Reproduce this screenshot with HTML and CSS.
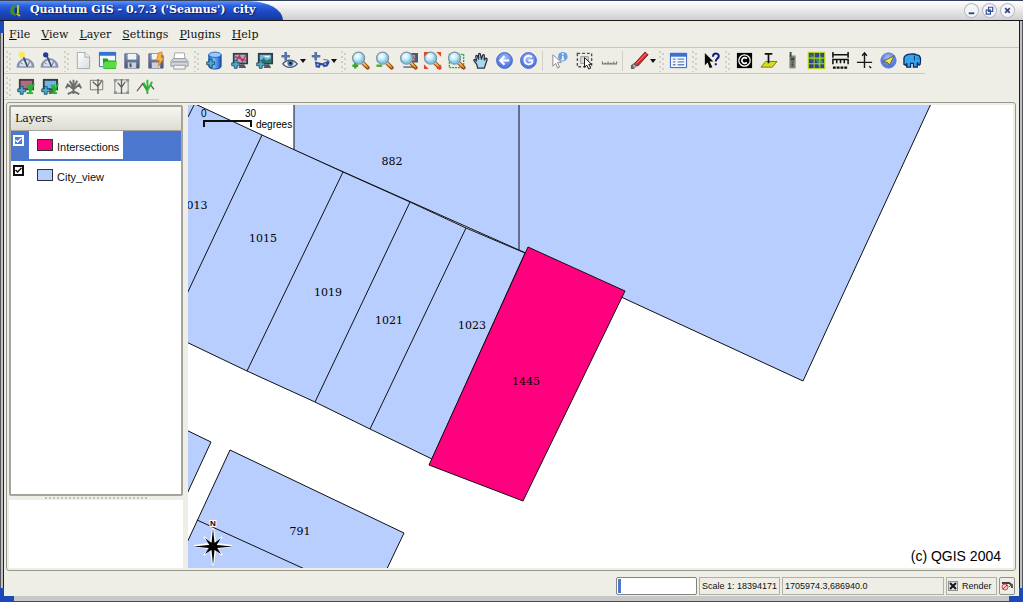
FILE: index.html
```html
<!DOCTYPE html>
<html lang="en">
<head>
<meta charset="utf-8">
<title>Quantum GIS - 0.7.3 ('Seamus') city</title>
<link rel="stylesheet" href="styles.css">
</head>
<body>
<svg class="defs" aria-hidden="true">
  <defs>
    <linearGradient id="wood" x1="0" y1="0" x2="1" y2="1"><stop offset="0" stop-color="#f8c060"/><stop offset="1" stop-color="#c05808"/></linearGradient>
    <radialGradient id="glass" cx=".4" cy=".35"><stop offset="0" stop-color="#fff"/><stop offset=".6" stop-color="#c4ecf8"/><stop offset="1" stop-color="#84c8e4"/></radialGradient>
    <radialGradient id="ball" cx=".5" cy=".35"><stop offset="0" stop-color="#b0c4fa"/><stop offset="1" stop-color="#5478e4"/></radialGradient>
    <linearGradient id="cyl" x1="0" x2="1"><stop offset="0" stop-color="#1c64d0"/><stop offset=".4" stop-color="#7cc0fc"/><stop offset="1" stop-color="#1450b8"/></linearGradient>
    <linearGradient id="page" x1="0" y1="0" x2="1" y2="1"><stop offset="0" stop-color="#fff"/><stop offset="1" stop-color="#d8dce4"/></linearGradient>
    <linearGradient id="metal" x1="0" y1="0" x2="0" y2="1"><stop offset="0" stop-color="#8c9cc0"/><stop offset="1" stop-color="#44506c"/></linearGradient>
  </defs>
  <symbol id="lens" viewBox="0 0 20 20"><path d="M12.500 12.500l5 5" stroke="#7c3c04" stroke-width="4" stroke-linecap="round"/><path d="M12.500 12.500l5 5" stroke="url(#wood)" stroke-width="2.500" stroke-linecap="round"/><path d="M13 12.500l4.500 4.500" stroke="#fcd888" stroke-width=".8"/><circle cx="8" cy="7.500" r="6.300" fill="url(#glass)" stroke="#7c98a8" stroke-width="1.400"/></symbol>
  <symbol id="plus" viewBox="0 0 10 10"><path d="M3.500.8h3v2.700h2.700v3H6.500v2.700h-3V6.500H.8v-3h2.700z" fill="#54a8c4" stroke="#144c6c" stroke-width=".9"/></symbol>
  <symbol id="gauge" viewBox="0 0 20 20"><path d="M1 17a9 9 0 0 1 18 0z" fill="#8494b4" stroke="#8c98b0"/><path d="M3.500 16a6.500 6.500 0 0 1 13 0z" fill="#dce4f0"/><path d="M7 4.500l5 12" stroke="#3c4868" stroke-width="1.800"/><path d="M12 16l2.500-5M5 12l2 2" stroke="#52607c"/></symbol>
  <symbol id="monitor" viewBox="0 0 20 20"><path d="M3 2h16v12H3z" fill="#343c44"/><path d="M5 4h12v8H5z" fill="#68b8e8"/><path d="M11 14h4l2 4H9z" fill="#505860"/></symbol>
</svg>

<div class="window">
  <header class="titlebar">
    <div class="tab">
      <svg class="logo" viewBox="0 0 14 14"><path d="M9 1C3 2 1 6 3 11l5 2-1-3C4 8 6 4 9 1z" fill="#4c8c28"/><path d="M10 2v8M8 10l4 3" stroke="#b4c438" stroke-width="2"/><path d="M8 5v6" stroke="#103818" stroke-width="1.500"/></svg>
      <h1>Quantum GIS - 0.7.3 ('Seamus')&nbsp; city</h1>
    </div>
    <div class="controls">
      <button type="button" aria-label="Minimize"><svg viewBox="0 0 14 14"><path d="M4 10h6" stroke="#34447c" stroke-width="2"/></svg></button>
      <button type="button" aria-label="Restore"><svg viewBox="0 0 14 14"><path d="M6 3.500h4.500V8H6zM3.500 6.500H8V11H3.500z" fill="none" stroke="#34549c" stroke-width="1.300"/></svg></button>
      <button type="button" aria-label="Close"><svg viewBox="0 0 14 14"><path d="M4.500 4.500l5 5m0-5l-5 5" stroke="#34447c" stroke-width="1.800"/></svg></button>
    </div>
  </header>

  <nav class="menubar">
    <button type="button"><u>F</u>ile</button>
    <button type="button"><u>V</u>iew</button>
    <button type="button"><u>L</u>ayer</button>
    <button type="button"><u>S</u>ettings</button>
    <button type="button"><u>P</u>lugins</button>
    <button type="button"><u>H</u>elp</button>
  </nav>

  <div class="toolbars">
    <div class="toolbar" role="toolbar" aria-label="Main tools">
      <div class="group"><i class="handle"></i>
        <button type="button" aria-label="Show most toolbars"><svg viewBox="0 0 20 20"><use href="#gauge"/><circle cx="6" cy="4" r="3.300" fill="#fce850"/></svg></button>
        <button type="button" aria-label="Hide most toolbars"><svg viewBox="0 0 20 20"><use href="#gauge"/><circle cx="6" cy="4" r="2.800" fill="#2438a4"/></svg></button>
      </div>
      <div class="group"><i class="handle"></i>
        <button type="button" aria-label="New project"><svg viewBox="0 0 20 20"><path d="M3.500 1.500h8l5 5v12h-13z" fill="url(#page)" stroke="#a4a8b0"/><path d="M11.500 1.500v5h5" fill="#eceef4" stroke="#a4a8b0"/></svg></button>
        <button type="button" aria-label="Open project"><svg viewBox="0 0 20 20"><path d="M1.500 1.500h17v15h-17z" fill="#f0f8fc" stroke="#3474c4"/><path d="M1 1h18v4H1z" fill="#3474d4"/><path d="M5 8h5l1 2h8v9H6z" fill="#1c9c20"/><path d="M7 11h13l-1 7.500H5z" fill="#5cdc44"/></svg></button>
        <button type="button" aria-label="Save project"><svg viewBox="0 0 20 20"><path d="M3 3h13l2 2v13H3z" fill="url(#metal)" stroke="#54607c"/><path d="M6 3h9v6H6z" fill="#f0f4fa"/><path d="M6 12h9v6H6z" fill="#c8d0dc"/><path d="M8 13h2v4H8z" fill="#444c64"/></svg></button>
        <button type="button" aria-label="Save project as"><svg viewBox="0 0 20 20"><path d="M3 3h13l2 2v13H3z" fill="url(#metal)" stroke="#54607c"/><path d="M6 3h9v6H6z" fill="#f0f4fa"/><path d="M6 12h9v6H6z" fill="#c8d0dc"/><path d="M13 2l4-1-1 6h3l-6 9 1-6h-3z" fill="#fcb43c" stroke="#dc7810" stroke-width=".8"/></svg></button>
        <button type="button" aria-label="Print"><svg viewBox="0 0 20 20"><path d="M5 2h10l1 7H4z" fill="#fff" stroke="#a0a4ac"/><path d="M3.500 8h13l2.500 3v5H1v-5z" fill="#d4d6dc" stroke="#94989e"/><path d="M4 15h12v4H4z" fill="#f4f4f6" stroke="#94989e"/><path d="M2 11.500h16" stroke="#84888e"/></svg></button>
      </div>
      <div class="group spaced"><i class="handle"></i>
        <button type="button" aria-label="Add database layer"><svg viewBox="0 0 20 20"><path d="M4 4v12c0 4 13 4 13 0V4z" fill="url(#cyl)" stroke="#1450a4"/><ellipse cx="10.500" cy="4" rx="6.500" ry="2.800" fill="#94ccfc" stroke="#2464bc"/><use href="#plus" x="1" y="8" width="10" height="10"/></svg></button>
        <button type="button" aria-label="Add vector layer"><svg viewBox="0 0 20 20"><use href="#monitor"/><path d="M5 4h12v8H5z" fill="#b4a8b4"/><path d="M6 11l4-6 3 6 4-7M5 6l12 4" stroke="#c82858" stroke-width="1.300" fill="none"/><use href="#plus" x="1" y="9" width="10" height="10"/></svg></button>
        <button type="button" aria-label="Add raster layer"><svg viewBox="0 0 20 20"><use href="#monitor"/><path d="M5 12l4-5 3 3 5-2v4z" fill="#2c7c58"/><path d="M8 5l6 2 2-2z" fill="#fff"/><use href="#plus" x="1" y="9" width="10" height="10"/></svg></button>
        <button type="button" class="drop" aria-label="Show layers"><svg viewBox="0 0 20 20"><path d="M3 13.500c4-5 11-5 15 0-4 5-11 5-15 0z" fill="#f0f4f8" stroke="#485468" stroke-width="1.500"/><circle cx="11" cy="13" r="3.200" fill="#4c78a8"/><circle cx="11" cy="13" r="1.300" fill="#101828"/><path d="M6 1v9M1.500 5.500h9" stroke="#5474ac" stroke-width="2.800"/></svg><b></b></button>
        <button type="button" class="drop" aria-label="Overview layers"><svg viewBox="0 0 20 20"><path d="M4 11l8 2 7-3 .5 2-2 4-4 1-1.500-2-2 0-1 3-4-1z" fill="#2c4c9c"/><path d="M6 14l2 .8M14 14l2-.6" stroke="#94b4ec" stroke-width="2"/><path d="M5 1v9M.8 5.500h9" stroke="#5474ac" stroke-width="2.800"/><path d="M13 9l4 .5 2 1.500" stroke="#687488" stroke-width="1.200" fill="none"/></svg><b></b></button>
      </div>
      <div class="group"><i class="handle"></i>
        <button type="button" aria-label="Zoom in"><svg viewBox="0 0 20 20"><use href="#lens"/><path d="M4.500 12.500v6M1.500 15.500h6" stroke="#38a420" stroke-width="2.500"/></svg></button>
        <button type="button" aria-label="Zoom out"><svg viewBox="0 0 20 20"><use href="#lens"/><path d="M1.500 15.500h6" stroke="#48ac2c" stroke-width="2.500"/></svg></button>
        <button type="button" aria-label="Zoom to layer"><svg viewBox="0 0 20 20"><path d="M8 2h12v10H6z" fill="#505868"/><path d="M13 4h4v6h-4z" fill="#94a0b4"/><path d="M14 5l3 4" stroke="#c82840"/><path d="M4 16h12l1 2H5z" fill="#788094"/><use href="#lens"/></svg></button>
        <button type="button" aria-label="Zoom full"><svg viewBox="0 0 20 20"><use href="#lens"/><path d="M1 6V1h5zM14 1h5v5zM1 14v5h5zM14 19h5v-5z" fill="#e04828"/></svg></button>
        <button type="button" aria-label="Zoom to selection"><svg viewBox="0 0 20 20"><path d="M2.500 3.500h15v14h-15z" fill="none" stroke="#28a020" stroke-width="1.400" stroke-dasharray="2 1"/><use href="#lens"/></svg></button>
        <button type="button" aria-label="Pan"><svg viewBox="0 0 20 20"><path d="M7 18l-1-4-3-4c0-2 2-1 3 1L5 6c0-2 2-2 2 0l1 3V4c0-2 2-2 2 0l1 5 1-4c1-2 2-1 2 0v5l1-2c1-1 2 0 2 1l-2 6-1 3z" fill="#a8d8f0" stroke="#28303c" stroke-width="1.300"/></svg></button>
        <button type="button" aria-label="Zoom previous"><svg viewBox="0 0 20 20"><circle cx="10" cy="10" r="8.300" fill="url(#ball)" stroke="#4464cc"/><path d="M15 10H6m4-4.500L5.500 10l4.500 4.500" stroke="#fff" stroke-width="2.200" fill="none"/></svg></button>
        <button type="button" aria-label="Refresh"><svg viewBox="0 0 20 20"><circle cx="10" cy="10" r="8.300" fill="url(#ball)" stroke="#4464cc"/><path d="M13.500 6.500A4.500 4.500 0 1 0 14 12v-2h-4" stroke="#fff" stroke-width="2" fill="none"/></svg></button>
      </div>
      <div class="group spaced"><i class="sep"></i>
        <button type="button" aria-label="Identify"><svg viewBox="0 0 20 20"><path d="M3 4v12l3-3 2 5 2-1-2-5h4z" fill="#fff" stroke="#84888c"/><circle cx="13.500" cy="6" r="5" fill="#68a0dc"/><path d="M13.500 5v4M13.500 2v2M12 9h3" stroke="#fff" stroke-width="1.500"/></svg></button>
        <button type="button" aria-label="Select features"><svg viewBox="0 0 20 20"><path d="M2.500 2.500h15v14h-15z" fill="none" stroke="#505050" stroke-width="1.500" stroke-dasharray="3 2"/><path d="M6 6h8v7H6z" fill="#e0e0dc" stroke="#909090"/><path d="M10 7v10l2.500-2 2 4 2-1-2-4h3z" fill="#fff" stroke="#101010"/></svg></button>
        <button type="button" aria-label="Measure"><svg viewBox="0 0 20 20"><path d="M2 13.500h16M2.500 11v2M5.500 12v2M8.500 11v2M11.500 12v2M14.500 11v2M17.500 11v2" stroke="#74787c" stroke-width="1.200"/></svg></button>
        <i class="sep"></i>
        <button type="button" class="drop" aria-label="Toggle editing"><svg viewBox="0 0 20 20"><path d="M5 13L16 1l3 3L8 16z" fill="#d42c2c" stroke="#7c1818"/><path d="M7 13L17 2.500" stroke="#f48c88"/><path d="M5 12l3 3-4 4H1v-4z" fill="#686464"/><path d="M3 14l3 2-2 2z" fill="#d8c0b0"/></svg><b></b></button>
      </div>
      <div class="group tight"><i class="handle"></i>
        <button type="button" aria-label="Attribute table"><svg viewBox="0 0 20 20"><path d="M1.500 2.500h17v15h-17z" fill="#f4f8fc" stroke="#2c58b4"/><path d="M1 2h18v4H1z" fill="#3c70d4"/><path d="M4 8.500h3M4 11.500h3M4 14.500h3M9 8.500h7M9 11.500h7M9 14.500h7" stroke="#6488c4" stroke-width="1.400"/></svg></button>
      </div>
      <div class="group tight"><i class="handle"></i>
        <button type="button" aria-label="What's this"><svg viewBox="0 0 20 20"><path d="M3 2v13l3-3 2 6 3-1-3-6h4z" fill="#080808"/><path d="M11.500 6c0-5 7-4 6 0-.5 2-3 2-3 5M14.500 13v2" stroke="#181c80" stroke-width="2.200" fill="none"/></svg></button>
      </div>
      <div class="group tight"><i class="handle"></i>
        <button type="button" aria-label="Copyright label"><svg viewBox="0 0 20 20"><path d="M2 2h16v16H2z"/><circle cx="10" cy="10" r="6" fill="none" stroke="#fff" stroke-width="1.300"/><path d="M12.500 8a3 3 0 1 0 0 4" fill="none" stroke="#fff" stroke-width="1.800"/></svg></button>
        <button type="button" aria-label="Add delimited text layer"><svg viewBox="0 0 20 20"><path d="M2 17l5-6h12l-5 6z" fill="#d4dc20" stroke="#747c10"/><path d="M6 3h8M10 3v10" stroke="#101010" stroke-width="1.800"/></svg></button>
        <button type="button" aria-label="GPS tools"><svg viewBox="0 0 20 20"><path d="M7 5h6v13H7z" fill="#788078" stroke="#a4a8a4"/><path d="M7 1h2v5H7z" fill="#404840"/><path d="M8 7h4v3H8z" fill="#404840"/><path d="M9 12h2M9 14h2M9 16h2" stroke="#303830"/></svg></button>
        <button type="button" aria-label="Graticule creator"><svg viewBox="0 0 20 20"><path d="M1 1h18v18H1z" fill="#244c88"/><path d="M3 3l4 3-2 5zM9 8l6-3 2 7-5 4z" fill="#3c8c60"/><path d="M1.500 1v18M7.500 1v18M13.500 1v18M18.500 1v18M1 1.500h18M1 7.500h18M1 13.500h18M1 18.500h18" stroke="#bccc28" stroke-width="1.100"/></svg></button>
        <button type="button" aria-label="Scale bar"><svg viewBox="0 0 20 20"><path d="M2 4h16M2 1v6M18 1v6M2 14V9h16v5M6 9v4M10 9v4M14 9v4" stroke="#101010" stroke-width="1.600" fill="none"/><path d="M2 17.500h16" stroke="#101010" stroke-width="2.500" stroke-dasharray="3 1"/></svg></button>
        <button type="button" aria-label="North arrow"><svg viewBox="0 0 20 20"><path d="M10 2v16M2 12h16M7.500 5L10 2l2.500 3M15 16l2 2" stroke="#181818" stroke-width="1.500" fill="none"/></svg></button>
        <button type="button" aria-label="Compass"><svg viewBox="0 0 20 20"><circle cx="10" cy="10" r="8" fill="url(#ball)" stroke="#5074dc"/><path d="M16 5l-5 10-2-3-5-1z" fill="#f0e858" stroke="#586020"/></svg></button>
        <button type="button" aria-label="Import to PostgreSQL"><svg viewBox="0 0 20 20"><path d="M1 14V8c0-6 12-5 13-4 5 0 5 5 4 10-1 2-2 0-3-2v5h-4v-4H8v4H4v-4l-1 2z" fill="#38a4ec" stroke="#082c64" stroke-width="1.400"/><path d="M12 5v5M15 8h1" stroke="#082c64"/></svg></button>
      </div>
    </div>
    <div class="toolbar" role="toolbar" aria-label="GRASS tools">
      <div class="group"><i class="handle"></i>
        <button type="button" aria-label="Add GRASS vector"><svg viewBox="0 0 20 20"><path d="M3 2h16v12H3z" fill="#4c3c44"/><path d="M5 4h12v8H5z" fill="#b06c80"/><path d="M12 8l3 8 4-9M15 8v9M11 17h7" stroke="#20b430" stroke-width="1.800" fill="none"/><use href="#plus" x="1" y="9" width="10" height="10"/></svg></button>
        <button type="button" aria-label="Add GRASS raster"><svg viewBox="0 0 20 20"><use href="#monitor"/><path d="M12 8l3 8 4-9M15 8v9M11 17h7" stroke="#20b430" stroke-width="1.800" fill="none"/><use href="#plus" x="1" y="9" width="10" height="10"/></svg></button>
        <button type="button" aria-label="GRASS tools"><svg viewBox="0 0 20 20"><path d="M10 3v15M10 11L6 4M10 11l4-7M10 13L4 8l-2 4M10 13l6-5 2 4M10 15l-6 3M10 15l6 3" stroke="#6c6c6c" stroke-width="2" fill="none"/></svg></button>
        <button type="button" aria-label="GRASS region"><svg viewBox="0 0 20 20"><path d="M2.500 3.500h13v10h-13z" fill="none" stroke="#787878"/><path d="M10.500 2v16M10.500 10L5 5M10.500 10l4-6" stroke="#606060" fill="none" stroke-width="1.400"/></svg></button>
        <button type="button" aria-label="Edit GRASS region"><svg viewBox="0 0 20 20"><path d="M3 3h14v14H3z" fill="none" stroke="#808080"/><path d="M2 2h3v3H2zM15 2h3v3h-3zM2 15h3v3H2zM15 15h3v3h-3z" fill="#909090"/><path d="M10 2v16M10 11L6 6M10 11l4-6" stroke="#606060" stroke-width="1.400"/></svg></button>
        <button type="button" aria-label="Edit GRASS vector"><svg viewBox="0 0 20 20"><path d="M1 15l6-8 5 8M15 8l4 5" stroke="#684c50" fill="none" stroke-width="1.300"/><path d="M12 3v15M12 14L8 6M12 14l5-9" stroke="#28b830" stroke-width="1.900" fill="none"/></svg></button>
      </div>
    </div>
  </div>

  <main class="workspace">
    <aside class="side">
      <section class="layers">
        <h2>Layers</h2>
        <ul>
          <li class="selected"><input type="checkbox" id="l1" checked><label for="l1"><span class="swatch pink"></span>Intersections</label></li>
          <li><input type="checkbox" id="l2" checked><label for="l2"><span class="swatch blue"></span>City_view</label></li>
        </ul>
      </section>
      <div class="splitter"></div>
      <section class="overview"></section>
    </aside>
    <svg class="map" viewBox="188 105 825 464" preserveAspectRatio="xMinYMin slice" role="img" aria-label="Map of city parcels">
      <g class="parcel">
        <path d="M294 100V150L519 250L528 254L803 381L935 95H294M519 100V250"/>
        <path d="M180 97L262 135L343 172L410 202L466 228L525 253L432 459L370 429L315 402L247 371L180 339z"/>
        <path d="M198 97L188 117M262 135L185 298M343 172L247 371M410 202L315 402M466 228L370 429"/>
        <path d="M180 427L211 442L180 509z"/>
        <path d="M230 450L404 533L384 575H172z"/>
        <path d="M197 520L320 576"/>
      </g>
      <path class="hit" d="M528 247L625 291L523 501L429 465z"/>
      <g class="names">
        <text x="197" y="209">013</text>
        <text x="392" y="165">882</text>
        <text x="263" y="242">1015</text>
        <text x="328" y="296">1019</text>
        <text x="389" y="324">1021</text>
        <text x="472" y="329">1023</text>
        <text x="526" y="385">1445</text>
        <text x="300" y="535">791</text>
      </g>
      <path class="scale" d="M204 127V121H251V127"/>
      <g class="units"><text x="201" y="117">0</text><text x="245" y="117">30</text><text x="256" y="128">degrees</text></g>
      <g class="north">
        <path class="halo" d="M213 528l2 15 2 1 15 2-15 2-2 2-2 15-2-15-2-2-15-2 15-2 2-1zM204 537l18 18M222 537l-18 18"/>
        <path d="M205 538l8 6 8-6-5 8 5 8-8-5-8 5 5-8z"/>
        <path d="M213 528l1.500 15 2.500 2 16 1.500-16 1.500-2.500 2-1.500 15-1.500-15-2.500-2-16-1.500 16-1.500 2.500-2z"/>
        <circle cx="213" cy="546" r="3.500"/>
        <text x="213" y="526">N</text>
      </g>
      <text class="copyright" x="1001" y="561">(c) QGIS 2004</text>
    </svg>
  </main>

  <footer class="status">
    <div class="progress" role="progressbar" aria-label="Progress"></div>
    <output class="cell scale-cell">Scale 1: 18394171</output>
    <output class="cell coords">1705974.3,686940.0</output>
    <div class="cell render"><input type="checkbox" id="render" checked><label for="render">Render</label></div>
    <button type="button" class="stop" aria-label="Projection"><svg viewBox="0 0 14 14"><path d="M2 4h7l3 2v3" stroke="#403c3c" stroke-width="1.800" fill="none"/><circle cx="5" cy="8" r="3" fill="#f8d0d0" stroke="#d84848"/><path d="M3 10l4-4M9 8l3-3" stroke="#b83030"/></svg></button>
  </footer>
</div>
</body>
</html>
```
FILE: styles.css
```css
* { box-sizing: border-box; }
body {
  margin: 0;
  height: 100vh;
  font-family: "DejaVu Serif", serif;
  color: #101010;
}
button {
  border: 0;
  margin: 0;
  padding: 0;
  background: none;
  font: inherit;
  color: inherit;
}
svg { display: block; }
.defs { position: absolute; width: 0; height: 0; }

.window {
  display: flex;
  flex-direction: column;
  height: 100%;
  padding: 0 4px 6px;
  background:
    linear-gradient(#eeeee6, #eeeee6) 0 0 / 100% 100% content-box content-box no-repeat,
    linear-gradient(#1c48b8, #1c48b8) 0 0 / 4px 33px no-repeat,
    linear-gradient(#1c48b8, #1c48b8) 0 100% / 14px 14px no-repeat,
    linear-gradient(#1c48b8, #1c48b8) 100% 100% / 14px 14px no-repeat,
    linear-gradient(#c8c8c8 5px, #484850 5px) 0 100% / 100% 6px no-repeat,
    linear-gradient(90deg, #55555c 1px, #c0c0c0 1px 3px, #202024 3px) 0 0 / 4px 100% no-repeat,
    linear-gradient(90deg, #202024 1px, #c0c0c0 1px 3px, #55555c 3px) 100% 0 / 4px 100% no-repeat;
}

.titlebar {
  display: flex;
  flex: none;
  justify-content: space-between;
  height: 21px;
  margin: 0 -4px;
  border-top: 1px solid #34405c;
  border-bottom: 1px solid #181818;
  background: linear-gradient(#fff, #e8e8ea 50%, #cfcfd2);
}
.tab {
  display: flex;
  align-items: center;
  gap: 8px;
  padding: 0 28px 2px 8px;
  border-top-right-radius: 35px 19px;
  background: linear-gradient(#5c94f4, #2c60e0 25%, #1c48c0 60%, #1838a0);
}
.logo { width: 14px; height: 14px; }
.tab h1 {
  margin: 0;
  font-size: 11px;
  line-height: 16px;
  white-space: nowrap;
  color: #fff;
  text-shadow: 1px 1px 1px #081c60;
}
.controls { display: flex; align-items: center; gap: 5px; padding-right: 9px; }
.controls button {
  width: 13px;
  height: 13px;
  border-radius: 50%;
  background: #f4f6fa;
  box-shadow: 0 0 0 1px #b8bac0;
}
.controls svg { width: 13px; height: 13px; }

.menubar {
  display: flex;
  flex: none;
  align-items: center;
  gap: 11px;
  height: 27px;
  padding: 0 5px;
  border-bottom: 1px solid #c8c8c0;
  font-size: 11px;
}

.toolbars { flex: none; height: 54px; }
.toolbar {
  display: flex;
  align-items: center;
  width: max-content;
  height: 26px;
  padding-left: 1px;
  border-bottom: 1px solid #c8c8c0;
}
.group { display: flex; align-items: center; margin-right: 2px; }
.group.spaced { gap: 1px; }
.group.tight { margin-right: 1px; }
.group.spaced:has(+ .tight) { margin-right: 1px; }
.toolbar button { display: flex; flex: none; align-items: center; justify-content: center; width: 24px; height: 24px; }
.toolbar svg { flex: none; width: 19px; height: 19px; }
.toolbar .drop { width: 30px; padding-left: 2px; gap: 1px; }
.drop b {
  border: 3px solid transparent;
  border-top: 4px solid #101010;
  border-bottom: 0;
}
.handle {
  width: 8px;
  height: 22px;
  background:
    radial-gradient(circle at 2px 2px, #d0d0c8 1px, transparent 1px) 0 0 / 8px 5px,
    radial-gradient(circle at 5px 4px, #d0d0c8 1px, transparent 1px) 0 0 / 8px 5px;
}
.sep { width: 4px; height: 20px; border-left: 1px solid #d0d0c8; }

.workspace {
  display: flex;
  flex: 1;
  gap: 5px;
  min-height: 0;
  margin: 0 3px 0 2px;
  padding: 2px;
  border: 1px solid #98988e;
  border-radius: 3px;
}
.side { display: flex; flex: none; flex-direction: column; width: 174px; }
.layers { flex: 1; border: 2px solid #a4a49c; border-radius: 2px; background: #fff; }
.layers h2 {
  margin: 0;
  padding: 4px;
  border-bottom: 1px solid #a4a49c;
  background: linear-gradient(#f6f6f0, #dedcd2);
  font-size: 11px;
  font-weight: 400;
  line-height: 15px;
}
.layers ul { margin: 0; padding: 0; list-style: none; }
.layers li { display: flex; align-items: flex-start; gap: 5px; height: 30px; padding-left: 2px; }
.layers li.selected { background: #4c78d0; }
.layers input {
  appearance: none;
  width: 11px;
  height: 11px;
  margin: 4px 0 0;
  border: 2px solid #101010;
  background: #fff url("data:image/svg+xml,%3Csvg xmlns='http://www.w3.org/2000/svg' viewBox='0 0 8 8'%3E%3Cpath d='M1 3.500l2 2L7 1.500' fill='none' stroke='%23101010' stroke-width='1.500'/%3E%3C/svg%3E") center / 8px;
}
.layers .selected input {
  border-color: #fff;
  background: #4c78d0 url("data:image/svg+xml,%3Csvg xmlns='http://www.w3.org/2000/svg' viewBox='0 0 8 8'%3E%3Cpath d='M1 3.500l2 2L7 1.500' fill='none' stroke='white' stroke-width='1.500'/%3E%3C/svg%3E") center / 8px;
}
.layers label {
  display: flex;
  align-items: center;
  gap: 4px;
  height: 28px;
  padding: 3px 4px 0 8px;
  background: #fff;
  font: 11px/16px "Liberation Sans", sans-serif;
}
.swatch { width: 16px; height: 12px; margin-bottom: 4px; border: 1px solid #303038; }
.pink { background: #ff007f; }
.blue { background: #b7ceff; }
.splitter {
  flex: none;
  width: 102px;
  height: 4px;
  margin: 0 auto;
  background: radial-gradient(circle at 1px 2px, #c4c4bc 1px, transparent 1px) 0 0 / 4px 4px;
}
.overview { flex: none; height: 68px; background: #fff; }

.map { flex: 1; min-width: 0; width: 100%; height: 100%; background: #fff; }
.parcel path { fill: #b7ceff; stroke: #101010; stroke-width: 1; }
.parcel path:nth-child(3), .parcel path:nth-child(6) { fill: none; }
.hit { fill: #ff007f; stroke: #101010; }
.names { font: 11px "DejaVu Serif", serif; text-anchor: middle; }
.scale { fill: none; stroke: #101010; stroke-width: 2; }
.units { font: 10px "Liberation Sans", sans-serif; }
.north .halo { fill: none; stroke: #fff; stroke-width: 2; }
.north text { font: bold 8px "Liberation Sans", sans-serif; text-anchor: middle; stroke: #fff; stroke-width: 2; paint-order: stroke; }
.copyright { font: 14px "Liberation Sans", sans-serif; text-anchor: end; }

.status {
  display: flex;
  flex: none;
  align-items: center;
  justify-content: flex-end;
  gap: 2px;
  height: 25px;
  padding: 4px 4px 0 0;
  font: 9px/14px "Liberation Sans", sans-serif;
}
.progress {
  width: 81px;
  height: 18px;
  border: 1px solid #84847c;
  border-radius: 2px;
  background: linear-gradient(#4c78d0, #4c78d0) 1px 1px / 3px 14px no-repeat #fff;
}
.cell { display: flex; align-items: center; height: 18px; padding-left: 2px; border: 1px solid #b0b0a8; white-space: nowrap; }
.scale-cell { width: 81px; }
.coords { width: 162px; }
.render { gap: 4px; width: 51px; padding-left: 1px; }
.render input {
  appearance: none;
  flex: none;
  width: 10px;
  height: 10px;
  margin: 0;
  border: 1px solid #909088;
  background: #e4e4e0 url("data:image/svg+xml,%3Csvg xmlns='http://www.w3.org/2000/svg' viewBox='0 0 8 8'%3E%3Cpath d='M1 1l6 6M7 1l-6 6' stroke='%23101828' stroke-width='2'/%3E%3C/svg%3E") center / 8px;
}
.stop { width: 16px; height: 18px; border: 1px solid #909088; border-radius: 2px; }
.stop svg { width: 14px; height: 14px; }
```
